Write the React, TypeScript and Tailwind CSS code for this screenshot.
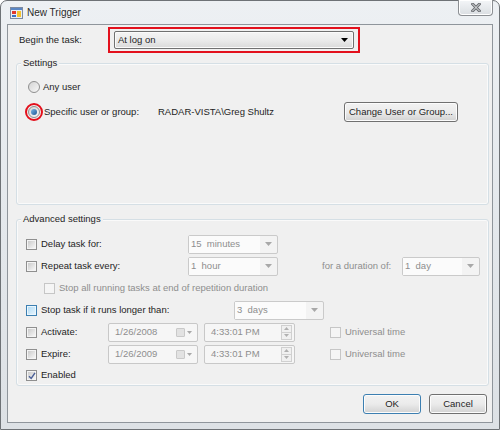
import React from "react";

type CbState = "normal" | "disabled" | "hover" | "checked";

function Check({ state }: { state: CbState }) {
  if (state === "disabled") {
    return (
      <div className="h-[11px] w-[11px] shrink-0 border border-[#c6c6c6] bg-[#f5f5f5]" />
    );
  }
  if (state === "hover") {
    return (
      <div className="flex h-[11px] w-[11px] shrink-0 items-center justify-center border border-[#3c7fb1] bg-[#eaf6fd]">
        <div className="h-[7px] w-[7px] bg-gradient-to-br from-[#b2dcf6] to-[#e4f3fc]" />
      </div>
    );
  }
  return (
    <div className="relative flex h-[11px] w-[11px] shrink-0 items-center justify-center border border-[#8f8f8f] bg-[#f4f4f4]">
      <div className="h-[7px] w-[7px] bg-gradient-to-br from-[#cbcbcb] to-[#f6f6f6]" />
      {state === "checked" && (
        <svg className="absolute left-[1px] top-[1px]" width="8" height="8" viewBox="0 0 8 8">
          <path d="M1 4.2 L3.2 6.5 L7 0.8" fill="none" stroke="#4a5f97" strokeWidth="1.4" />
        </svg>
      )}
    </div>
  );
}

function Radio({ selected }: { selected?: boolean }) {
  return (
    <div className="relative flex h-[12px] w-[12px] shrink-0 items-center justify-center rounded-full border border-[#8f8f8f] bg-gradient-to-br from-[#d4d4d4] to-[#f8f8f8]">
      {selected && (
        <div className="h-[6px] w-[6px] rounded-full bg-gradient-to-br from-[#7ab8e6] to-[#1c5a96]" />
      )}
    </div>
  );
}

function DisabledCombo({ text, w }: { text: string; w: string }) {
  return (
    <div className={`flex h-[19px] ${w} items-center rounded-[2px] border border-[#cacaca] bg-[#f3f3f3]`}>
      <div className="flex h-full flex-1 items-center whitespace-pre bg-[#fbfbfb] pl-[2px] text-[#8e8e8e]">
        {text}
      </div>
      <div className="flex h-full w-[17px] items-center justify-center">
        <svg width="7" height="4" viewBox="0 0 7 4">
          <path d="M0 0 H7 L3.5 4 Z" fill="#a8a8a8" />
        </svg>
      </div>
    </div>
  );
}

function DateBox({ text }: { text: string }) {
  return (
    <div className="flex h-[19px] w-[90px] items-center rounded-[2px] border border-[#c8c8c8] bg-[#f6f6f6] pl-[6px] pr-[5px] text-[#8e8e8e]">
      <span className="flex-1">{text}</span>
      <div className="h-[9px] w-[9px] rounded-[1px] border border-[#c9c9c9] bg-[#e2e2e2]" />
      <svg className="ml-[2px]" width="5" height="3" viewBox="0 0 5 3">
        <path d="M0 0 H5 L2.5 3 Z" fill="#a8a8a8" />
      </svg>
    </div>
  );
}

function TimeBox() {
  return (
    <div className="flex h-[19px] w-[91px] items-center rounded-[2px] border border-[#c8c8c8] bg-[#f6f6f6] pl-[6px] pr-[2px] text-[#8e8e8e]">
      <span className="flex-1">4:33:01 PM</span>
      <div className="flex h-[15px] w-[11px] flex-col">
        <div className="flex flex-1 items-center justify-center border border-[#d0d0d0] bg-[#f0f0f0]">
          <svg width="5" height="3" viewBox="0 0 5 3">
            <path d="M0 3 H5 L2.5 0 Z" fill="#b0b0b0" />
          </svg>
        </div>
        <div className="flex flex-1 items-center justify-center border border-t-0 border-[#d0d0d0] bg-[#f0f0f0]">
          <svg width="5" height="3" viewBox="0 0 5 3">
            <path d="M0 0 H5 L2.5 3 Z" fill="#b0b0b0" />
          </svg>
        </div>
      </div>
    </div>
  );
}

function Button({ children, w, isDefault }: { children: React.ReactNode; w: string; isDefault?: boolean }) {
  return (
    <div
      className={`flex h-[20px] ${w} items-center justify-center rounded-[3px] border ${
        isDefault ? "border-[#3c7fb1]" : "border-[#707070]"
      } bg-gradient-to-b from-[#f2f2f2] via-[#ebebeb] to-[#d2d2d2] text-[#1e1e1e] shadow-[inset_0_0_0_1px_#fcfcfc]`}
    >
      {children}
    </div>
  );
}

export default function App() {
  return (
    <div className="flex h-[430px] w-[500px] flex-col rounded-t-[7px] border border-[#6e7276] bg-gradient-to-b from-[#edf0f3] via-[#e4e8ec] to-[#dde1e5] font-['Liberation_Sans',Arial,sans-serif] text-[9.5px] leading-[12px] text-[#1e1e1e]">
      {/* Title bar */}
      <div className="flex h-[23px] shrink-0 items-start">
        <svg className="ml-[9px] mt-[6px]" width="13" height="12" viewBox="0 0 13 12">
          <rect x="0.5" y="0.5" width="12" height="11" fill="#e9eef5" stroke="#7d8aa0" />
          <rect x="1" y="1" width="11" height="2" fill="#5a86c4" />
          <rect x="2" y="4" width="4" height="3" fill="#e23a2e" />
          <rect x="7" y="4" width="4" height="6" fill="#f4c430" />
          <rect x="2" y="8" width="4" height="2" fill="#3b6fc0" />
        </svg>
        <span className="ml-[4px] mt-[6px] text-[10px] text-[#2a2a2a] [text-shadow:0_0_4px_#ffffff]">
          New Trigger
        </span>
        <div className="-mt-[1px] ml-auto mr-[6px] flex h-[16px] w-[35px] items-center justify-center rounded-b-[4px] border border-t-0 border-[#8c8f93] bg-gradient-to-b from-[#f4f6f8] to-[#dadee2] shadow-[inset_0_0_0_1px_#ffffff]">
          <svg width="10" height="9" viewBox="0 0 10 9">
            <path d="M1.5 1 L8.5 8 M8.5 1 L1.5 8" stroke="#6c6f73" strokeWidth="3" strokeLinecap="square" />
            <path d="M1.5 1 L8.5 8 M8.5 1 L1.5 8" stroke="#e6e8ea" strokeWidth="1" strokeLinecap="square" />
          </svg>
        </div>
      </div>

      {/* Client area */}
      <div className="mx-[6px] flex h-[399px] shrink-0 flex-col border border-[#8f959b] bg-[#f0f0f0]">
        {/* Begin the task */}
        <div className="flex items-center pl-[11px] pt-[2px]">
          <span className="w-[89px]">Begin the task:</span>
          <div className="flex h-[26px] w-[252px] items-center justify-center border-2 border-[#e3101c]">
            <div className="flex h-[18px] w-[240px] items-center rounded-[2px] border border-[#707070] bg-gradient-to-b from-[#f4f4f4] via-[#ebebeb] to-[#d9d9d9] pl-[3px] pr-[5px] shadow-[inset_0_0_0_1px_#fbfbfb]">
              <span className="flex-1">At log on</span>
              <svg width="7" height="4" viewBox="0 0 7 4">
                <path d="M0 0 H7 L3.5 4 Z" fill="#000" />
              </svg>
            </div>
          </div>
        </div>

        {/* Settings */}
        <div className="relative ml-[8px] mt-[10px] h-[142px] w-[473px] rounded-[3px] border border-[#d5dfe5] shadow-[inset_0_0_0_1px_#fafafa]">
          <span className="absolute -top-[7px] left-[4px] bg-[#f0f0f0] px-[2px]">Settings</span>
          <div className="flex flex-col pl-[11px] pt-[15px]">
            <div className="flex h-[16px] items-center">
              <Radio />
              <span className="ml-[3px]">Any user</span>
            </div>
            <div className="mt-[5px] flex h-[23px] items-center">
              <div className="relative">
                <Radio selected />
                <div className="absolute -inset-[3px] rounded-full border-2 border-[#e3101c]" />
              </div>
              <span className="ml-[4px] w-[114px]">Specific user or group:</span>
              <span className="w-[186px]">RADAR-VISTA\Greg Shultz</span>
              <Button w="w-[114px]">Change User or Group...</Button>
            </div>
          </div>
        </div>

        {/* Advanced settings */}
        <div className="relative ml-[8px] mt-[14px] h-[167px] w-[473px] rounded-[3px] border border-[#d5dfe5] shadow-[inset_0_0_0_1px_#fafafa]">
          <span className="absolute -top-[7px] left-[4px] bg-[#f0f0f0] px-[2px]">Advanced settings</span>
          <div className="flex flex-col pl-[9px] pt-[13px]">
            <div className="flex h-[22px] items-center">
              <Check state="normal" />
              <span className="ml-[4px] w-[147px]">Delay task for:</span>
              <DisabledCombo text="15  minutes" w="w-[90px]" />
            </div>
            <div className="flex h-[22px] items-center">
              <Check state="normal" />
              <span className="ml-[4px] w-[147px]">Repeat task every:</span>
              <DisabledCombo text="1  hour" w="w-[90px]" />
              <span className="ml-[44px] w-[80px] text-[#8e8e8e]">for a duration of:</span>
              <DisabledCombo text="1  day" w="w-[78px]" />
            </div>
            <div className="flex h-[22px] items-center pl-[18px]">
              <Check state="disabled" />
              <span className="ml-[4px] text-[#8e8e8e]">Stop all running tasks at end of repetition duration</span>
            </div>
            <div className="flex h-[22px] items-center">
              <Check state="hover" />
              <span className="ml-[4px] w-[193px]">Stop task if it runs longer than:</span>
              <DisabledCombo text="3  days" w="w-[90px]" />
            </div>
            <div className="flex h-[22px] items-center">
              <Check state="normal" />
              <span className="ml-[4px] w-[67px]">Activate:</span>
              <DateBox text="1/26/2008" />
              <div className="ml-[6px]">
                <TimeBox />
              </div>
              <div className="ml-[35px]">
                <Check state="disabled" />
              </div>
              <span className="ml-[4px] text-[#8e8e8e]">Universal time</span>
            </div>
            <div className="flex h-[22px] items-center">
              <Check state="normal" />
              <span className="ml-[4px] w-[67px]">Expire:</span>
              <DateBox text="1/26/2009" />
              <div className="ml-[6px]">
                <TimeBox />
              </div>
              <div className="ml-[35px]">
                <Check state="disabled" />
              </div>
              <span className="ml-[4px] text-[#8e8e8e]">Universal time</span>
            </div>
            <div className="flex h-[20px] items-center">
              <Check state="checked" />
              <span className="ml-[4px]">Enabled</span>
            </div>
          </div>
        </div>

        {/* Buttons */}
        <div className="mr-[5px] mt-[8px] flex justify-end gap-[8px]">
          <Button w="w-[58px]" isDefault>
            OK
          </Button>
          <Button w="w-[58px]">Cancel</Button>
        </div>
      </div>
    </div>
  );
}
